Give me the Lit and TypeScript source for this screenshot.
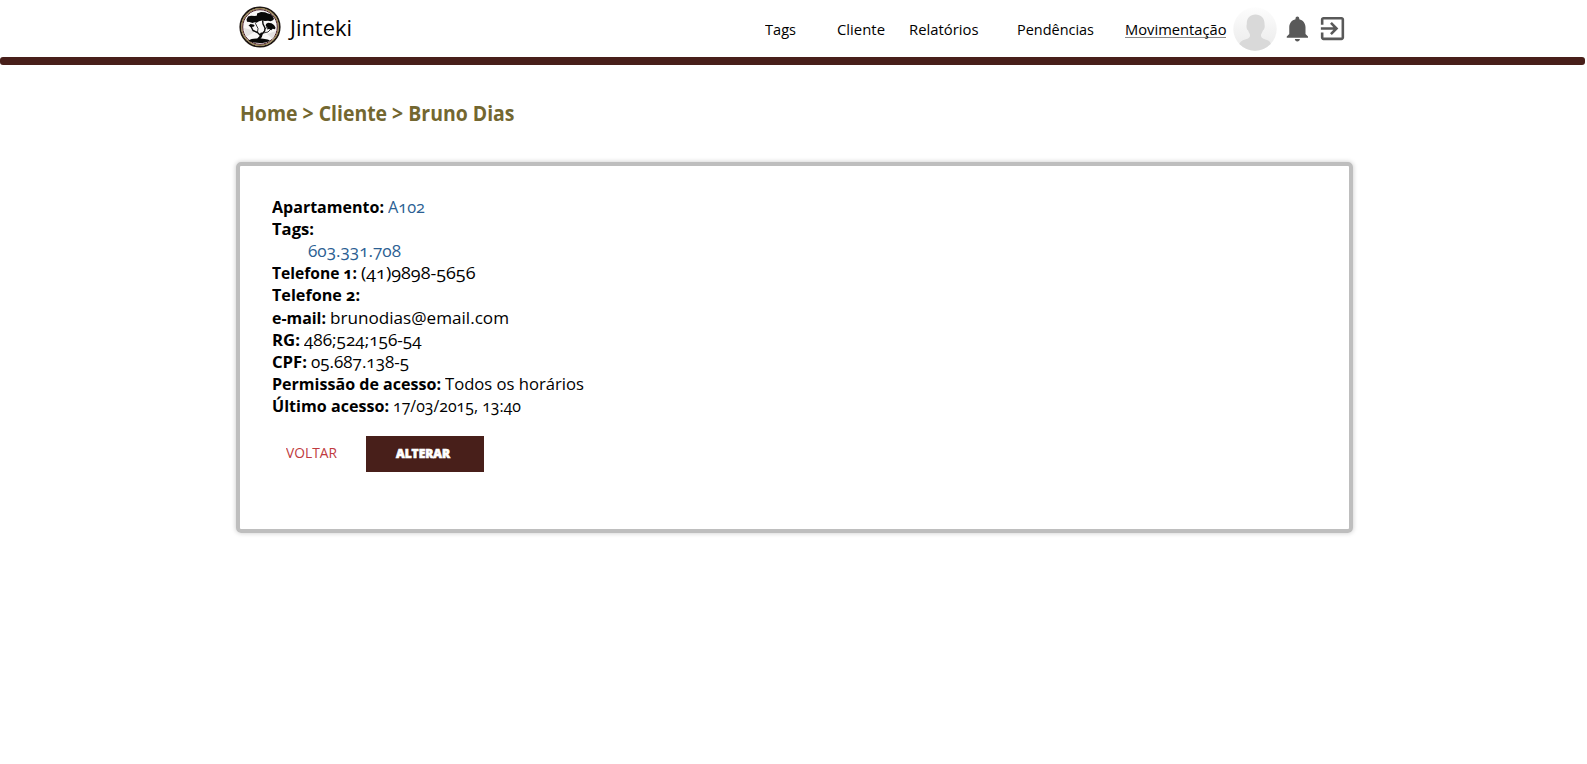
import { LitElement, html, svg, css } from "lit";
import { customElement, property, query } from "lit/decorators.js";

/** Text run that condenses or widens its glyphs to a given measure. */
@customElement("fit-text")
class FitText extends LitElement {
  static styles = css`
    :host { display: inline-block; white-space: nowrap; }
    .run { display: inline-block; transform-origin: 0 50%; white-space: pre; }
  `;
  @property({ type: Number }) measure = 0;
  @property() text = "";
  @query(".run") run!: HTMLElement;

  updated() {
    this.style.width = `${this.measure}px`;
    this.run.style.transform = "none";
    const natural = this.run.getBoundingClientRect().width;
    if (natural) this.run.style.transform = `scaleX(${this.measure / natural})`;
  }
  render() {
    return html`<span class="run">${this.text}</span>`;
  }
}

const t = (text: string, measure: number) =>
  html`<fit-text .text=${text} .measure=${measure}></fit-text>`;

type Row = { label?: string; lw?: number; value?: string; vw?: number; link?: boolean; nested?: boolean };

const rows: Row[] = [
  { label: "Apartamento:", lw: 112, value: "A102", vw: 37, link: true },
  { label: "Tags:", lw: 42 },
  { value: "603.331.708", vw: 93, link: true, nested: true },
  { label: "Telefone 1:", lw: 85, value: "(41)9898-5656", vw: 114.5 },
  { label: "Telefone 2:", lw: 88 },
  { label: "e-mail:", lw: 54, value: "brunodias@email.com", vw: 179 },
  { label: "RG:", lw: 28, value: "486;524;156-54", vw: 117.5 },
  { label: "CPF:", lw: 35, value: "05.687.138-5", vw: 98 },
  { label: "Permissão de acesso:", lw: 169, value: "Todos os horários", vw: 139 },
  { label: "Último acesso:", lw: 117, value: "17/03/2015, 13:40", vw: 128 },
];

const logo = svg`
  <circle cx="21" cy="21" r="19.7" fill="#fff" stroke="#1d1512" stroke-width="1.8"/>
  <circle cx="21" cy="21" r="18.3" fill="none" stroke="#93804a" stroke-width="1.2"/>
  <circle cx="21" cy="21" r="17.3" fill="#f8f7f7" stroke="#4a1d2a" stroke-width="1"/>
  <path d="M5 22 17 25 7 31zM37 25 28 28 34 33z" fill="#e4e2e2"/>
  <g fill="#080808">
    <path d="M7.500 13.500l1.500-3 3-.8 4 .3 2-.5 0-2 4-1.500 4 .2 3 1.300 2.500.5 2.500 2.500 1 2.500-1.500 1.500-2 .8-2.500-.6-3 .3-3-.5-3 .8-2.500 1.500-2-.5-2 .6-3-1-2.500-.2z"/>
    <path d="M27 18l2-1.300 3.500.6 2.500 1.700 1.500 2.500-.5 1.800-2.300-.5-1.500 1.500-2.200-1.200-2 .3 .5-2-1.800-1.300z"/>
    <path d="M9.500 19.500l2-1.500 3 .5 1.200 1.200-1.200 1-3 .3z"/>
    <path d="M9.500 34.500c2-1.500 6-2 10-2s9 .5 11.500 2c-2.500 1.900-6.500 2.500-10.500 2.500s-8.500-.6-11-2.500z"/>
  </g>
  <g fill="none" stroke="#080808" stroke-linecap="round" stroke-linejoin="round">
    <path stroke-width="2.400" d="M19.500 33c1.800-1.500 3-3.200 2.800-5.200"/>
    <path stroke-width="1.400" d="M22 30l-3.500-3.500-4.500-2-2-4M22.500 28.500l3.200-3.500.3-3-2-4-.3-3"/>
    <path stroke-width=".8" d="M18.500 26.500l.5-4-2.500-5M24.500 27l4.500-1 2.500-2.500M26 23l3-2.500"/>
  </g>
`;

@customElement("app-root")
class AppRoot extends LitElement {
  static styles = css`
    :host {
      display: block;
      min-height: 764px;
      background: #fff;
      color: #000;
      font-family: "Open Sans", "Noto Sans", sans-serif;
      font-feature-settings: "onum" 1;
    }
    svg { display: block; flex: none; }
    header {
      display: flex;
      align-items: center;
      height: 57px;
      padding: 0 235px 0 238.5px;
      box-sizing: border-box;
    }
    .logo { margin-bottom: 3px; }
    .brand { margin-left: 9px; font-size: 21.5px; line-height: 30px; margin-bottom: 1px; }
    nav { display: flex; margin-left: 413px; font-size: 15px; line-height: 20px; }
    nav span { display: block; height: 20px; }
    .n1 { margin-left: 41px; }
    .n2 { margin-left: 24px; }
    .n3 { margin-left: 38.5px; }
    .n4 { margin-left: 31px; }
    nav .current { height: 18px; border-bottom: 1px solid #8b8b8b; }
    .avatar { margin-left: 6.5px; }
    .bell { margin-left: 6px; }
    .exit { margin-left: 4px; }
    .bar { height: 8px; margin-right: 2px; border-radius: 3px; background: #481f1a; }
    h1 {
      margin: 33px 0 0 239.5px;
      font-size: 20.5px;
      line-height: 30px;
      font-weight: 700;
      color: #736730;
    }
    main {
      box-sizing: border-box;
      width: 1117px;
      height: 371px;
      margin: 34px 0 0 236px;
      padding: 29.700px 32px 28px 32.3px;
      border: 4px solid #bebebe;
      border-radius: 5px;
      box-shadow: 0 0 5px rgba(0, 0, 0, 0.22);
    }
    .row { display: flex; gap: 4px; height: 22.2px; line-height: 22.2px; font-size: 16.5px; }
    .nested { padding-left: 36px; }
    .label { font-weight: 700; }
    .link { color: #2c5f93; }
    .actions { display: flex; align-items: center; margin-top: 18.3px; height: 36px; }
    .back { width: 79.7px; margin-left: 14px; font-size: 14px; line-height: 20px; margin-bottom: 2px; color: #c03b40; }
    .primary {
      box-sizing: border-box;
      width: 118px;
      height: 36px;
      padding-left: 30px;
      background: #481f1a;
      color: #fff;
      font-weight: 800;
      font-size: 12.5px;
      line-height: 35px;
      -webkit-text-stroke: 0.7px #fff;
    }
  `;

  render() {
    return html`
      <header>
        <svg class="logo" width="42" height="42" viewBox="0 0 42 42">${logo}</svg>
        <span class="brand">${t("Jinteki", 62)}</span>
        <nav>
          <span>${t("Tags", 31)}</span>
          <span class="n1">${t("Cliente", 48)}</span>
          <span class="n2">${t("Relatórios", 69.5)}</span>
          <span class="n3">${t("Pendências", 77)}</span>
          <span class="n4 current">${t("Movimentação", 101.5)}</span>
        </nav>
        <svg class="avatar" width="44" height="44" viewBox="0 0 44 44">
          <defs>
            <linearGradient id="g" x2="0" y2="1"><stop stop-color="#fdfdfd"/><stop offset="1" stop-color="#eaeaea"/></linearGradient>
            <clipPath id="c"><circle cx="22" cy="22" r="21.700"/></clipPath>
          </defs>
          <g clip-path="url(#c)">
            <path fill="url(#g)" d="M0 0h44v44H0z"/>
            <path fill="#d9d9d9" d="M22.500 7.500c5.500 0 9 3.500 9 9 0 2 .7 2.500-.2 5-.5 1.500-1.300 1.500-1.800 3-.5 1.700-1.500 2-1.500 4 0 3 3.500 3.500 6 4.500 3 1 4.500 3 5 11H5c.5-8 2.500-9.700 5.500-11 3-1 6.500-1.500 6.500-4.500 0-2-1-2.500-1.500-4-.4-1.500-1.300-1.500-1.700-3-.7-2.500 0-3 0-5 0-5.500 3.200-9 8.700-9z"/>
          </g>
        </svg>
        <svg class="bell" width="30" height="30" viewBox="0 0 24 24" fill="#595959">
          <path d="M11.500 22c1.100 0 2-.9 2-2h-4c0 1.100.9 2 2 2zm6.500-6v-5.500c0-3.070-2.130-5.640-5-6.320V3.500c0-.83-.67-1.500-1.500-1.500S10 2.670 10 3.500v.68c-2.870.68-5 3.250-5 6.320V16l-2 2v1h17v-1l-2-2z"/>
        </svg>
        <svg class="exit" width="31" height="31" viewBox="0 0 24 24" fill="#595959">
          <path d="M10.090 15.590L11.500 17l5-5-5-5-1.410 1.410L12.670 11H3v2h9.670l-2.580 2.590zM19 3H5c-1.110 0-2 .9-2 2v4h2V5h14v14H5v-4H3v4c0 1.100.89 2 2 2h14c1.100 0 2-.9 2-2V5c0-1.100-.9-2-2-2z"/>
        </svg>
      </header>
      <div class="bar"></div>
      <h1>${t("Home > Cliente > Bruno Dias", 274.5)}</h1>
      <main>
        ${rows.map(
          (r) => html`<div class="row ${r.nested ? "nested" : ""}">
            ${r.label ? html`<span class="label">${t(r.label, r.lw!)}</span>` : ""}
            ${r.value ? html`<span class=${r.link ? "link" : ""}>${t(r.value, r.vw!)}</span>` : ""}
          </div>`
        )}
        <div class="actions">
          <span class="back">${t("VOLTAR", 51)}</span>
          <span class="primary">${t("ALTERAR", 54)}</span>
        </div>
      </main>
    `;
  }
}
